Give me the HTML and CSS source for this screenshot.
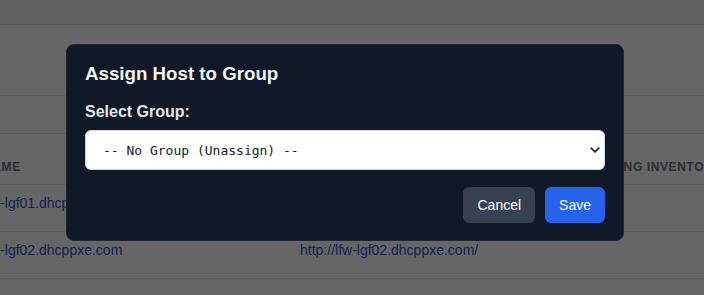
FILE: index.html
```html
<!DOCTYPE html>
<html lang="en">
<head>
<meta charset="utf-8">
<title>Assign Host to Group</title>
<link rel="stylesheet" href="styles.css">
</head>
<body>
<div class="page">
  <div class="topbar"></div>
  <div class="toolbar"></div>
  <div class="filters"></div>
  <div class="table">
    <div class="row head">
      <div class="cell">Name</div>
      <div class="cell">URL</div>
      <div class="cell">Existing Inventory</div>
    </div>
    <div class="row">
      <div class="cell"><a href="#">lfw-lgf01.dhcppxe.com</a></div>
      <div class="cell"><a href="#">http://lfw-lgf01.dhcppxe.com/</a></div>
      <div class="cell"></div>
    </div>
    <div class="row">
      <div class="cell"><a href="#">lfw-lgf02.dhcppxe.com</a></div>
      <div class="cell"><a href="#">http://lfw-lgf02.dhcppxe.com/</a></div>
      <div class="cell"></div>
    </div>
  </div>
</div>

<div class="overlay">
  <div class="modal">
    <h2 class="modal-title">Assign Host to Group</h2>
    <label class="field-label" for="group">Select Group:</label>
    <div class="select-wrap">
      <select id="group" class="select">
        <option>-- No Group (Unassign) --</option>
      </select>
      <svg class="chevron" width="10" height="6" viewBox="0 0 10 6"><path d="M1.2 1.2 L5 4.8 L8.8 1.2" fill="none" stroke="#1f2937" stroke-width="1.8" stroke-linecap="round" stroke-linejoin="round"/></svg>
    </div>
    <div class="actions">
      <button class="btn btn-cancel">Cancel</button>
      <button class="btn btn-save">Save</button>
    </div>
  </div>
</div>
</body>
</html>
```
FILE: styles.css
```css
* { box-sizing: border-box; }
html, body { margin: 0; padding: 0; }
body {
  width: 704px;
  height: 295px;
  overflow: hidden;
  background: #ffffff;
  font-family: "Liberation Sans", Arial, sans-serif;
  color: #111827;
}
.page { width: 704px; overflow: hidden; }
.topbar {
  height: 25px;
  background: #f1f3f4;
  border-bottom: 1px solid #e2e4e8;
}
.toolbar {
  height: 71px;
  border-bottom: 1px solid #e5e7eb;
}
.filters {
  height: 38px;
  border-bottom: 1px solid #e5e7eb;
}
.table { margin-left: -33px; width: 900px; }
.row {
  display: grid;
  grid-template-columns: 317px 282px 1fr;
  border-bottom: 1px solid #e5e7eb;
  height: 47px;
}
.row.head { height: 51px; }
.cell {
  padding: 8px 16px 0;
  font-size: 14px;
  line-height: 20px;
  white-space: nowrap;
}
.head .cell {
  padding-top: 25px;
  font-size: 12px;
  line-height: 16px;
  font-weight: 700;
  text-transform: uppercase;
  letter-spacing: 0.05em;
  color: #6b7280;
}
.cell a { color: #3355cc; text-decoration: none; }

.overlay {
  position: fixed;
  inset: 0;
  background: rgba(0, 0, 0, 0.6);
  display: flex;
  align-items: flex-start;
  padding: 44px 0 0 66px;
}
.modal {
  width: 558px;
  background: #111827;
  border: 1px solid #1f2733;
  border-radius: 8px;
  padding: 18px 18px 17px;
}
.modal-title {
  margin: 0 0 17px;
  font-size: 18.72px;
  line-height: 22px;
  font-weight: 700;
  color: #f3f4f6;
}
.field-label {
  display: block;
  margin-bottom: 8px;
  font-size: 16px;
  line-height: 20px;
  font-weight: 700;
  color: #e5e7eb;
}
.select-wrap { position: relative; }
.select {
  display: block;
  width: 100%;
  height: 40px;
  appearance: none;
  -webkit-appearance: none;
  background: #ffffff;
  border: 1px solid #d1d5db;
  border-radius: 6px;
  padding: 0 30px 0 17px;
  font-family: "DejaVu Sans Mono", "Liberation Mono", monospace;
  font-size: 13px;
  color: #111827;
  outline: none;
}
.chevron {
  position: absolute;
  right: 5px;
  top: 17px;
  pointer-events: none;
}
.actions {
  display: flex;
  justify-content: flex-end;
  gap: 10px;
  margin-top: 17px;
}
.btn {
  height: 36px;
  padding: 0 14px;
  border: none;
  border-radius: 6px;
  font-family: "Liberation Sans", Arial, sans-serif;
  font-size: 14px;
  line-height: 20px;
  color: #ffffff;
}
.btn-cancel { background: #374151; }
.btn-save { background: #2563eb; }
```
